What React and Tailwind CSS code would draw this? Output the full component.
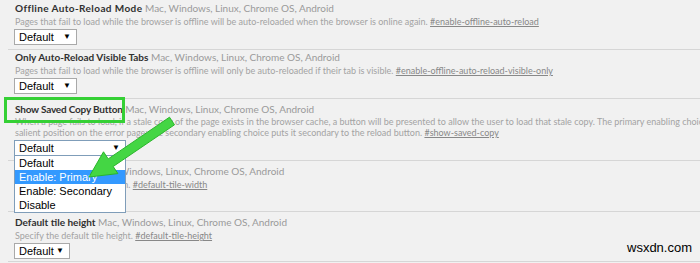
import React from "react";

const platforms = "Mac, Windows, Linux, Chrome OS, Android";

const FakeSelect = ({ width, open }) => (
  <div
    className={`flex items-center justify-between bg-white border h-[16px] pl-[4px] pr-[5px] text-[11px] leading-none text-black ${width} ${
      open ? "border-[#7f9db9]" : "border-[#a9a9a9]"
    }`}
    style={{ fontFamily: '"Liberation Sans", Arial, sans-serif' }}
  >
    <span>Default</span>
    <span className="text-[8px]">▼</span>
  </div>
);

const Flag = ({ title, desc, link, height, top, select, children, titleClass = "" }) => (
  <div className={`border-b border-[#d6d6d6] pl-[7px] ${height} ${top}`}>
    <div className="text-[10px] leading-[13px] whitespace-nowrap">
      <span className={`font-bold text-[#303030] ${titleClass}`}>{title}</span>{" "}
      <span className="text-[#9a9a9a]">{platforms}</span>
    </div>
    {children || (
      <div className="text-[9px] leading-[13px] text-[#a3a3a3] whitespace-nowrap">
        {desc} <span className="underline text-[#888888]">{link}</span>
      </div>
    )}
    {select}
  </div>
);

export default function App() {
  return (
    <div
      className="relative w-[700px] h-[263px] bg-[#f1f1f1] overflow-hidden"
      style={{ fontFamily: 'Lato, "Open Sans", sans-serif' }}
    >
      <div className="ml-2">
        <Flag
          title="Offline Auto-Reload Mode"
          titleClass="tracking-[0.4px]"
          desc="Pages that fail to load while the browser is offline will be auto-reloaded when the browser is online again."
          link="#enable-offline-auto-reload"
          height="h-[50px]"
          top="pt-[2px]"
          select={
            <div className="mt-[1px] -ml-[1px]">
              <FakeSelect width="w-[63px]" />
            </div>
          }
        />
        <Flag
          title="Only Auto-Reload Visible Tabs"
          desc="Pages that fail to load while the browser is offline will only be auto-reloaded if their tab is visible."
          link="#enable-offline-auto-reload-visible-only"
          height="h-[49px]"
          top="pt-[1px]"
          select={
            <div className="mt-[1px] -ml-[1px]">
              <FakeSelect width="w-[63px]" />
            </div>
          }
        />
        <Flag
          title="Show Saved Copy Button"
          titleClass="tracking-[-0.2px]"
          height="h-[62px]"
          top="pt-[4px]"
          select={
            <div className="mt-[2px] -ml-[1px]">
              <FakeSelect width="w-[112px]" open />
            </div>
          }
        >
          <div className="text-[9px] leading-[11px] text-[#a3a3a3] whitespace-nowrap">
            <div>
              When a page fails to load, if a stale copy of the page exists in the browser cache, a button will be
              presented to allow the user to load that stale copy. The primary enabling choice puts the button in the most
            </div>
            <div>
              salient position on the error page; the secondary enabling choice puts it secondary to the reload button.{" "}
              <span className="underline text-[#888888]">#show-saved-copy</span>
            </div>
          </div>
        </Flag>
        <Flag
          title="Default tile width"
          desc="Specify the default tile width."
          link="#default-tile-width"
          height="h-[51px]"
          top="pt-[4px]"
        />
        <Flag
          title="Default tile height"
          desc="Specify the default tile height."
          link="#default-tile-height"
          height="h-[50px]"
          top="pt-[4px]"
          select={
            <div className="mt-[1px] -ml-[1px]">
              <FakeSelect width="w-[56px]" />
            </div>
          }
        />
      </div>

      {/* open dropdown list */}
      <div
        className="absolute left-[14px] top-[155px] w-[112px] bg-white border border-[#7f9db9] text-[11px] text-black"
        style={{ fontFamily: '"Liberation Sans", Arial, sans-serif' }}
      >
        <div className="h-[14px] leading-[14px] pl-[4px]">Default</div>
        <div className="h-[14px] leading-[14px] pl-[4px] bg-[#3399ff] text-white">Enable: Primary</div>
        <div className="h-[14px] leading-[14px] pl-[4px]">Enable: Secondary</div>
        <div className="h-[14px] leading-[14px] pl-[4px]">Disable</div>
      </div>

      {/* green highlight box */}
      <div className="absolute left-[4px] top-[97px] w-[121px] h-[26px] border-[3px] border-[#35d035]" />

      {/* green arrow */}
      <svg className="absolute left-0 top-0" width="700" height="263" viewBox="0 0 700 263">
        <polygon
          points="169.5,117.2 174.5,124.8 113.2,166.5 117.9,173.6 89,177 103.5,151.8 108.2,158.9"
          fill="#44d644"
          stroke="#2bb52b"
          strokeWidth="1"
          strokeLinejoin="round"
        />
      </svg>

      <div
        className="absolute left-[627px] top-[238px] text-[13px] text-black"
        style={{ fontFamily: '"Liberation Sans", Arial, sans-serif' }}
      >
        wsxdn.com
      </div>
    </div>
  );
}
